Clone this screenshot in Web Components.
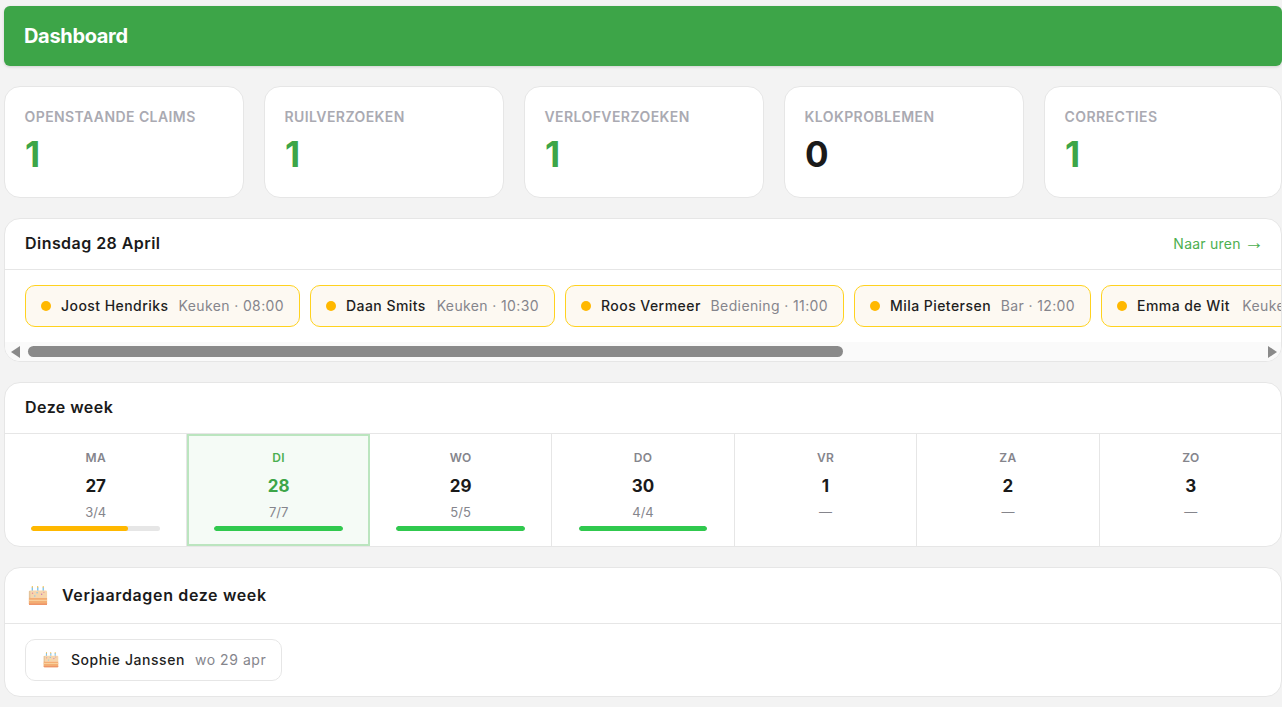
<!DOCTYPE html>
<html lang="nl">
<head>
<meta charset="utf-8">
<title>Dashboard</title>
<style>
  html, body { margin: 0; height: 100%; overflow: hidden; background: #f3f3f3; }
  body { font-family: Inter, "Noto Sans", sans-serif; color: #1a1a1a; padding: 6px 0 0 4px; box-sizing: border-box; }
  #page { display: flex; flex-direction: column; gap: 20px; width: 1278px; }
  #stats { display: grid; grid-template-columns: repeat(4, 240px) 1fr; gap: 20px; }
  #week { display: grid; grid-template-columns: repeat(7, 182.45px); }
  #chips { display: flex; gap: 10px; padding: 15px 20px; width: max-content; }
  #birthdays { display: flex; padding: 15px 20px; }
  .arrow { font-family: "Liberation Sans", sans-serif; font-size: 20px; line-height: 0; letter-spacing: 0; margin: 0 -3px 0 -1px; }
</style>
</head>
<body>
<div id="page">
  <top-bar>Dashboard</top-bar>
  <div id="stats">
    <stat-card label="Openstaande claims" value="1"></stat-card>
    <stat-card label="Ruilverzoeken" value="1"></stat-card>
    <stat-card label="Verlofverzoeken" value="1"></stat-card>
    <stat-card label="Klokproblemen" value="0" muted></stat-card>
    <stat-card label="Correcties" value="1"></stat-card>
  </div>
  <dash-panel>
    <span slot="title">Dinsdag 28 April</span>
    <link-action slot="action">Naar uren <span class="arrow">→</span></link-action>
    <div id="chips">
      <shift-chip style="width:275px" name="Joost Hendriks" info="Keuken · 08:00"></shift-chip>
      <shift-chip style="width:245px" name="Daan Smits" info="Keuken · 10:30"></shift-chip>
      <shift-chip style="width:279px" name="Roos Vermeer" info="Bediening · 11:00"></shift-chip>
      <shift-chip style="width:237px" name="Mila Pietersen" info="Bar · 12:00"></shift-chip>
      <shift-chip style="width:260px" name="Emma de Wit" info="Keuken · 14:00"></shift-chip>
    </div>
    <fake-scrollbar></fake-scrollbar>
  </dash-panel>
  <dash-panel>
    <span slot="title">Deze week</span>
    <div id="week">
      <day-cell day="MA" date="27" count="3/4" fill="75" tone="amber"></day-cell>
      <day-cell day="DI" date="28" count="7/7" fill="100" today></day-cell>
      <day-cell day="WO" date="29" count="5/5" fill="100"></day-cell>
      <day-cell day="DO" date="30" count="4/4" fill="100"></day-cell>
      <day-cell day="VR" date="1" count="—"></day-cell>
      <day-cell day="ZA" date="2" count="—"></day-cell>
      <day-cell day="ZO" date="3" count="—" last></day-cell>
    </div>
  </dash-panel>
  <dash-panel tall>
    <span slot="title"><cake-icon size="20" style="margin:3px 0 0 3px"></cake-icon>Verjaardagen deze week</span>
    <div id="birthdays">
      <birthday-chip name="Sophie Janssen" date="wo 29 apr"></birthday-chip>
    </div>
  </dash-panel>
</div>

<script>
class TopBar extends HTMLElement {
  constructor() {
    super();
    this.attachShadow({ mode: 'open' }).innerHTML = `
      <style>
        :host {
          display: flex; align-items: center; height: 60px; padding: 0 20px;
          background: #3da548; color: #fff; border-radius: 6px;
          box-shadow: 0 1px 3px rgba(0,0,0,.14);
          font-size: 20px; font-weight: 700; letter-spacing: -.33px;
        }
      </style>
      <slot></slot>`;
  }
}

class StatCard extends HTMLElement {
  connectedCallback() {
    const muted = this.hasAttribute('muted');
    this.attachShadow({ mode: 'open' }).innerHTML = `
      <style>
        :host {
          display: block; box-sizing: border-box; height: 112px; padding: 21px 20px 0;
          background: #fff; border: 1px solid #e6e6e6; border-radius: 16px;
        }
        .label { font-size: 14px; line-height: 18px; font-weight: 600; color: #aaaab2; text-transform: uppercase; letter-spacing: .42px; white-space: nowrap; margin-left: -.5px; }
        .value { font-size: 35px; line-height: 40px; margin-top: 8px; font-weight: 700; color: ${muted ? '#1a1a1a' : '#3da548'}; }
      </style>
      <div class="label">${this.getAttribute('label')}</div>
      <div class="value">${this.getAttribute('value')}</div>`;
  }
}

class DashPanel extends HTMLElement {
  connectedCallback() {
    const tall = this.hasAttribute('tall');
    this.attachShadow({ mode: 'open' }).innerHTML = `
      <style>
        :host {
          display: block; background: #fff; border: 1px solid #e6e6e6;
          border-radius: 16px; overflow: hidden;
        }
        header {
          display: flex; align-items: center; justify-content: space-between;
          height: ${tall ? 53 : 48}px; padding: 0 20px 2px; border-bottom: 1px solid #e6e6e6;
          font-size: 16px; font-weight: 600; letter-spacing: ${tall ? .65 : .45}px;
        }
        ::slotted([slot=title]) { display: flex; align-items: center; gap: 14px; }
      </style>
      <header><slot name="title"></slot><slot name="action"></slot></header>
      <slot></slot>`;
  }
}

class LinkAction extends HTMLElement {
  constructor() {
    super();
    this.attachShadow({ mode: 'open' }).innerHTML = `
      <style>
        :host { color: #4caf50; font-size: 14px; font-weight: 400; letter-spacing: .25px; white-space: nowrap; }
      </style>
      <slot></slot>`;
  }
}

class ShiftChip extends HTMLElement {
  connectedCallback() {
    this.attachShadow({ mode: 'open' }).innerHTML = `
      <style>
        :host {
          display: flex; align-items: center; flex: none; box-sizing: border-box; height: 42px;
          padding: 0 15px; background: #fdf9f2; border: 1px solid #ffd21f; border-radius: 10px;
          font-size: 14px; white-space: nowrap;
        }
        i { flex: none; width: 10px; height: 10px; border-radius: 50%; background: #ffb800; margin-right: 10px; }
        b { font-weight: 500; color: #1f1f1f; margin-right: auto; letter-spacing: .45px; padding-bottom: 2px; }
        span { color: #85858c; letter-spacing: .38px; padding-bottom: 2px; }
      </style>
      <i></i><b>${this.getAttribute('name')}</b><span>${this.getAttribute('info')}</span>`;
  }
}

class FakeScrollbar extends HTMLElement {
  constructor() {
    super();
    this.attachShadow({ mode: 'open' }).innerHTML = `
      <style>
        :host {
          display: flex; align-items: center; height: 19px; padding: 0 4px 0 6px;
          background: #fafafa;
        }
        .thumb { width: 815px; height: 11px; margin-left: 8px; border-radius: 6px; background: #8a8a8a; }
        svg { display: block; flex: none; }
        .end { margin-left: auto; }
      </style>
      <svg width="9" height="12" viewBox="0 0 9 12"><path d="M9 0v12L0 6z" fill="#8a8a8a"/></svg>
      <div class="thumb"></div>
      <svg class="end" width="9" height="12" viewBox="0 0 9 12"><path d="M0 0v12l9-6z" fill="#8a8a8a"/></svg>`;
  }
}

class DayCell extends HTMLElement {
  connectedCallback() {
    const today = this.hasAttribute('today');
    const last = this.hasAttribute('last');
    const fill = this.getAttribute('fill');
    const tone = this.getAttribute('tone') === 'amber' ? '#ffb800' : '#30c94e';
    this.attachShadow({ mode: 'open' }).innerHTML = `
      <style>
        :host {
          display: flex; flex-direction: column; align-items: center; box-sizing: border-box;
          height: 112px; padding-top: ${today ? 14 : 16}px;
          ${today ? 'background: #f5fbf6; border: 2px solid #bbe5bf;' : last ? '' : 'border-right: 1px solid #e6e6e6;'}
        }
        .day { font-size: 12px; line-height: 15px; font-weight: 600; color: ${today ? '#4caf50' : '#85858c'}; letter-spacing: .3px; }
        .date { font-size: 17px; line-height: 22px; margin-top: 10px; font-weight: 700; color: ${today ? '#3da548' : '#1a1a1a'}; }
        .count { font-size: 13px; line-height: 16px; margin-top: 7px; color: #85858c; }
        .bar { width: 128.5px; height: 5px; margin-top: 6px; border-radius: 3px; background: #e6e6e6; overflow: hidden; }
        .bar div { height: 100%; border-radius: 3px; background: ${tone}; }
      </style>
      <div class="day">${this.getAttribute('day')}</div>
      <div class="date">${this.getAttribute('date')}</div>
      <div class="count">${this.getAttribute('count')}</div>
      ${fill ? `<div class="bar"><div style="width:${fill}%"></div></div>` : ''}`;
  }
}

class CakeIcon extends HTMLElement {
  connectedCallback() {
    const size = this.getAttribute('size');
    this.attachShadow({ mode: 'open' }).innerHTML = `
      <style>:host { display: inline-flex; flex: none; } svg { display: block; }</style>
      <svg width="${size}" height="${size}" viewBox="0 0 22 22">
        <path d="M4 1.5h1.5v4H4zM10 1.5h1.5v4H10zM16 1.5h1.5v4H16z" fill="#7cc4ee"/>
        <path d="M4.2 0h1v2h-1zM10.2 0h1v2h-1zM16.2 0h1v2h-1z" fill="#f7b733"/>
        <path d="M1 6.5Q1 5 2.5 5h17Q21 5 21 6.5V13H1z" fill="#f6d6ac"/>
        <path d="M1 5.5h1.6V20H1z" fill="#e3c49c"/>
        <path d="M1 13h20v7a1 1 0 0 1-1 1H2a1 1 0 0 1-1-1z" fill="#f3ae74"/>
        <path d="M1 15h20v1.6H1z" fill="#f9d09c"/>
        <path d="M1 19.3h20v.7a1 1 0 0 1-1 1H2a1 1 0 0 1-1-1z" fill="#ee9468"/>
        <circle cx="5" cy="8" r=".8" fill="#e58ba0"/><circle cx="10" cy="7.5" r=".8" fill="#7cc4ee"/>
        <circle cx="15" cy="9" r=".8" fill="#c77ab8"/><circle cx="7.5" cy="11" r=".7" fill="#7cc4ee"/>
        <circle cx="17.5" cy="7" r=".7" fill="#e58ba0"/>
      </svg>`;
  }
}

class BirthdayChip extends HTMLElement {
  connectedCallback() {
    this.attachShadow({ mode: 'open' }).innerHTML = `
      <style>
        :host {
          display: flex; align-items: center; box-sizing: border-box; height: 42px;
          padding: 0 15px 0 17px; background: #fff; border: 1px solid #e6e6e6; border-radius: 10px;
          font-size: 14px; white-space: nowrap;
        }
        b { font-weight: 500; color: #1f1f1f; margin: 0 10px 0 12px; letter-spacing: .55px; padding-bottom: 2px; }
        span { color: #85858c; letter-spacing: .55px; padding-bottom: 2px; }
      </style>
      <cake-icon size="16"></cake-icon><b>${this.getAttribute('name')}</b><span>${this.getAttribute('date')}</span>`;
  }
}

customElements.define('top-bar', TopBar);
customElements.define('stat-card', StatCard);
customElements.define('dash-panel', DashPanel);
customElements.define('link-action', LinkAction);
customElements.define('shift-chip', ShiftChip);
customElements.define('fake-scrollbar', FakeScrollbar);
customElements.define('day-cell', DayCell);
customElements.define('cake-icon', CakeIcon);
customElements.define('birthday-chip', BirthdayChip);
</script>
</body>
</html>
